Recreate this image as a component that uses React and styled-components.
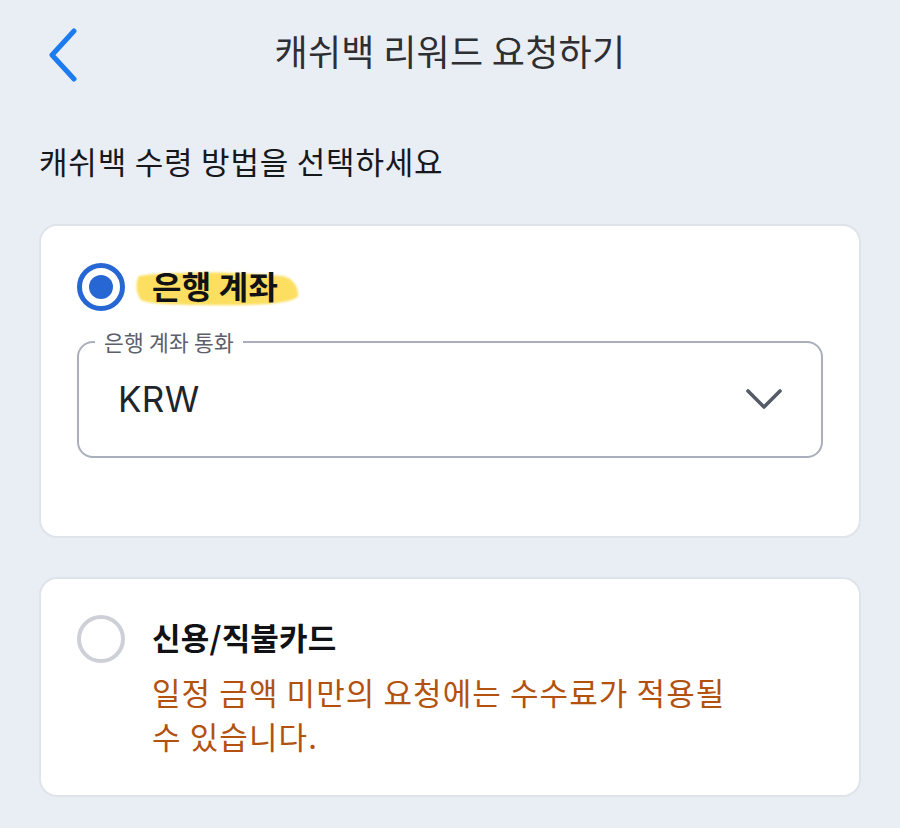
import React from "react";
import styled, { createGlobalStyle } from "styled-components";

const Global = createGlobalStyle`
  html, body {
    margin: 0;
    padding: 0;
    background: #e9edf4;
  }
  body {
    font-family: "Noto Sans CJK KR", "Noto Sans", sans-serif;
    -webkit-font-smoothing: antialiased;
  }
`;

const Page = styled.div`
  width: 900px;
  min-height: 828px;
  background: #e9edf4;
`;

const Header = styled.header`
  position: relative;
  height: 110px;
  box-sizing: border-box;
  padding-bottom: 10px;
  display: flex;
  align-items: center;
  justify-content: center;
`;

const BackButton = styled.button`
  position: absolute;
  left: 42px;
  top: 24px;
  width: 40px;
  height: 60px;
  padding: 0;
  border: none;
  background: none;
  display: flex;
  align-items: center;
  justify-content: center;
`;

const Title = styled.h1`
  margin: 0;
  font-size: 36px;
  line-height: 48px;
  font-weight: 400;
  color: #2d2f33;
  letter-spacing: 0.3px;
`;

const Content = styled.main`
  padding: 0 39px;
  display: flex;
  flex-direction: column;
`;

const Subtitle = styled.p`
  margin: 31px 0 43px;
  font-size: 31px;
  line-height: 40px;
  font-weight: 400;
  color: #16181c;
  letter-spacing: 0.8px;
`;

const Card = styled.section`
  background: #ffffff;
  border: 2px solid #dfe3ea;
  border-radius: 18px;
  padding: ${(p) => p.$padding};
  min-height: ${(p) => p.$minHeight || "auto"};
  box-sizing: border-box;
  & + & {
    margin-top: 39px;
  }
`;

const OptionRow = styled.div`
  display: flex;
  align-items: flex-start;
  gap: 27px;
`;

const Radio = styled.span`
  flex: none;
  width: 48px;
  height: 48px;
  border-radius: 50%;
  box-sizing: border-box;
  border: ${(p) => (p.$checked ? "5px solid #2667d4" : "4px solid #cdd0d7")};
  display: flex;
  align-items: center;
  justify-content: center;
  &::after {
    content: "";
    display: ${(p) => (p.$checked ? "block" : "none")};
    width: 24px;
    height: 24px;
    border-radius: 50%;
    background: #2667d4;
  }
`;

const OptionBody = styled.div`
  display: flex;
  flex-direction: column;
  padding-top: 1px;
`;

const Label = styled.span`
  position: relative;
  align-self: flex-start;
  font-size: ${(p) => p.$size || "31px"};
  line-height: 42px;
  font-weight: 700;
  color: #111215;
  letter-spacing: 0.2px;
`;

const LabelText = styled.span`
  position: relative;
`;

const Marker = styled.svg`
  position: absolute;
  left: -17px;
  top: 6px;
  width: 166px;
  height: 38px;
  filter: blur(1.2px);
`;

const Notice = styled.p`
  margin: 12px 0 0;
  max-width: 600px;
  font-size: 31px;
  line-height: 44px;
  color: #b2520e;
  letter-spacing: 1.1px;
`;

const Field = styled.fieldset`
  margin: 18px 0 0;
  padding: 0 38px 0 39px;
  height: 129px;
  box-sizing: border-box;
  border: 2px solid #a9afbc;
  border-radius: 16px;
  display: flex;
  align-items: center;
  justify-content: space-between;
`;

const Legend = styled.legend`
  margin-left: -23px;
  padding: 0 9px;
  font-size: 21.5px;
  line-height: 26px;
  color: #5b606b;
  letter-spacing: 0.2px;
`;

const Value = styled.span`
  font-family: Inter, "Noto Sans", sans-serif;
  font-size: 35px;
  color: #20242b;
  margin-top: -14px;
  letter-spacing: 0.3px;
`;

const Chevron = styled.svg`
  width: 38px;
  height: 22px;
  margin-top: -14px;
`;

export default function App() {
  return (
    <Page>
      <Global />
      <Header>
        <BackButton aria-label="뒤로">
          <svg width="32" height="56" viewBox="0 0 32 56">
            <path
              d="M28 5 L6 29 L28 53"
              fill="none"
              stroke="#1c7bef"
              strokeWidth="5"
              strokeLinecap="round"
              strokeLinejoin="round"
            />
          </svg>
        </BackButton>
        <Title>캐쉬백 리워드 요청하기</Title>
      </Header>
      <Content>
        <Subtitle>캐쉬백 수령 방법을 선택하세요</Subtitle>

        <Card $padding="37px 36px 0 36px" $minHeight="314px">
          <OptionRow>
            <Radio $checked />
            <OptionBody>
              <Label $size="32px">
                <Marker viewBox="0 0 166 38" preserveAspectRatio="none">
                  <path
                    d="M4 6 C40 1 110 2 148 6 C158 8 164 18 163 26 C158 34 120 36 70 35 C40 35 14 34 6 30 C1 24 0 12 4 6 Z"
                    fill="#fcdc52"
                    opacity="0.92"
                  />
                </Marker>
                <LabelText>은행 계좌</LabelText>
              </Label>
            </OptionBody>
          </OptionRow>
          <Field>
            <Legend>은행 계좌 통화</Legend>
            <Value>KRW</Value>
            <Chevron viewBox="0 0 38 22">
              <path
                d="M3 3 L19 19 L35 3"
                fill="none"
                stroke="#555c68"
                strokeWidth="3.6"
                strokeLinecap="round"
                strokeLinejoin="round"
              />
            </Chevron>
          </Field>
        </Card>

        <Card $padding="36px 36px 37px 36px">
          <OptionRow>
            <Radio />
            <OptionBody>
              <Label>신용/직불카드</Label>
              <Notice>일정 금액 미만의 요청에는 수수료가 적용될 수 있습니다.</Notice>
            </OptionBody>
          </OptionRow>
        </Card>
      </Content>
    </Page>
  );
}
